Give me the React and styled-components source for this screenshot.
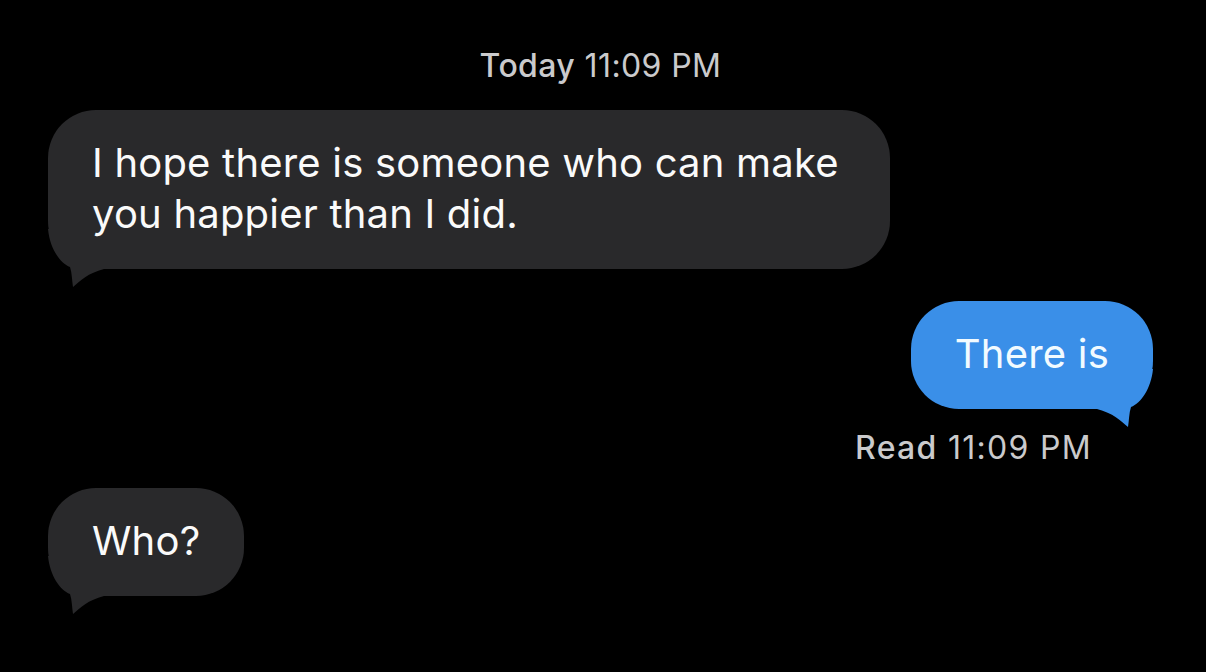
import React from "react";
import styled, { createGlobalStyle } from "styled-components";

const GlobalStyle = createGlobalStyle`
  html, body {
    margin: 0;
    padding: 0;
    background: #000;
  }
  body {
    font-family: Inter, "Noto Sans", "Liberation Sans", sans-serif;
    -webkit-font-smoothing: antialiased;
  }
`;

const Thread = styled.div`
  width: 1206px;
  height: 672px;
  box-sizing: border-box;
  padding: 47px 53px 0 48px;
  display: flex;
  flex-direction: column;
  background: #000;
  overflow: hidden;
`;

const Stamp = styled.div`
  align-self: ${p => (p.$right ? "flex-end" : "center")};
  margin: ${p => p.$margin || "0"};
  font-size: 32px;
  line-height: 38px;
  color: #cacacc;
  letter-spacing: ${p => (p.$right ? "1.3px" : "0.4px")};

  b {
    font-weight: 500;
  }
`;

const Bubble = styled.div`
  position: relative;
  isolation: isolate;
  box-sizing: border-box;
  align-self: ${p => (p.$mine ? "flex-end" : "flex-start")};
  max-width: ${p => p.$max || "none"};
  margin: ${p => p.$margin || "0"};
  padding: 27px 44px 30px;
  border-radius: 48px;
  background: ${p => (p.$mine ? "#3a8fe8" : "#29292b")};
  color: ${p => (p.$mine ? "#f2fbff" : "#fafafa")};
  font-size: 40px;
  line-height: 51px;
  letter-spacing: 0.2px;
`;

const Tail = styled.svg`
  position: absolute;
  z-index: -1;
  bottom: -22px;
  ${p => (p.$mine ? "right: 0;" : "left: 0;")}
  transform: ${p => (p.$mine ? "scaleX(-1)" : "none")};
  width: 70px;
  height: 62px;
  pointer-events: none;
`;

// iMessage-style tail hooked under the bubble's bottom corner
const BubbleTail = ({ mine }) => (
  <Tail $mine={mine} viewBox="0 0 70 62">
    <path
      d="M0 0 C2 20 12 34 22 38 C24 44 24 52 25 58 C32 52 40 44 56 40 L56 0 Z"
      fill={mine ? "#3a8fe8" : "#29292b"}
    />
  </Tail>
);

const Message = ({ mine, children, ...rest }) => (
  <Bubble $mine={mine} {...rest}>
    {children}
    <BubbleTail mine={mine} />
  </Bubble>
);

export default function App() {
  return (
    <>
      <GlobalStyle />
      <Thread>
        <Stamp>
          <b>Today</b> 11:09 PM
        </Stamp>
        <Message $max="842px" $margin="25px 0 0 0">
          I hope there is someone who can make you happier than I did.
        </Message>
        <Message mine $margin="32px 0 0 0">
          There is
        </Message>
        <Stamp $right $margin="20px 61px 0 0">
          <b>Read</b> 11:09 PM
        </Stamp>
        <Message $margin="21px 0 0 0">Who?</Message>
      </Thread>
    </>
  );
}
